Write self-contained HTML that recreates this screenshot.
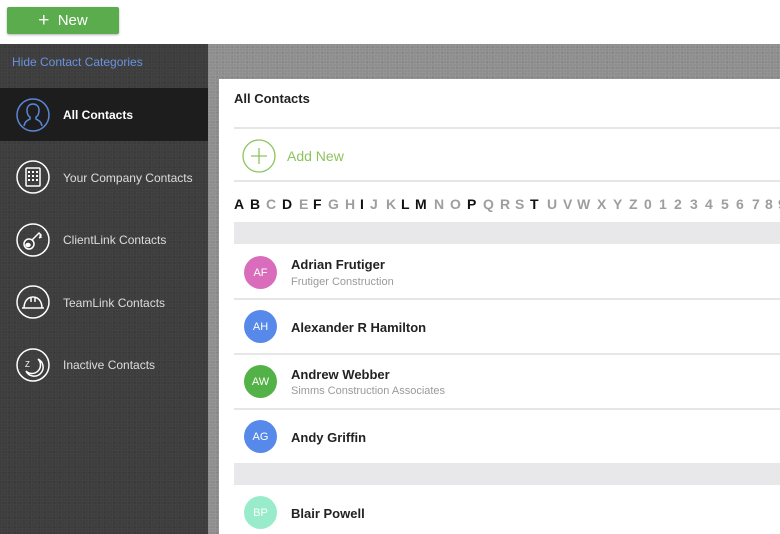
<!DOCTYPE html>
<html><head><meta charset="utf-8"><style>
*{margin:0;padding:0;box-sizing:border-box}
body{width:780px;height:534px;overflow:hidden;background:#fff;font-family:"Liberation Sans",sans-serif;position:relative}
.top{position:absolute;left:0;top:0;width:780px;height:44px;background:#fff}
.btn{position:absolute;left:7px;top:7px;width:112px;height:27px;background:#5aac4c;border-radius:2px;color:#fff;font-size:15px;line-height:27px;text-align:center;box-shadow:0 1px 2px rgba(0,0,0,.3)}
.btn b{font-weight:normal;font-size:19px;vertical-align:-1px}
.bg{position:absolute;left:208px;top:44px;width:572px;height:490px;background:#8c8c8c;background-image:radial-gradient(#999 1px,transparent 1.2px),radial-gradient(#7e7e7e 1px,transparent 1.2px);background-size:3px 3px,5px 5px;background-position:0 0,2px 1px}
.side{position:absolute;left:0;top:44px;width:208px;height:490px;background:#3d3d3d;background-image:radial-gradient(#444 1px,transparent 1.2px),radial-gradient(#353535 1px,transparent 1.2px);background-size:3px 3px,5px 5px;background-position:0 0,2px 1px}
.hide{position:absolute;left:12px;top:55px;color:#6a92e0;font-size:12px}
.sel{position:absolute;left:0;top:88px;width:208px;height:53px;background:#1d1d1d}
.item{position:absolute;left:63px;color:#ddd;font-size:12px}
.ic{position:absolute;left:16px;width:34px;height:34px}
.panel{position:absolute;left:219px;top:79px;width:561px;height:455px;background:#fff}
.abs{position:absolute}
.line{position:absolute;left:234px;right:0;height:2px;background:#e6e6e6}
.band{position:absolute;left:234px;right:0;height:22px;background:#e8e8ea}
.av{position:absolute;left:244px;width:33px;height:33px;border-radius:50%;color:#fff;font-size:11px;display:flex;align-items:center;justify-content:center;opacity:.95}
.nm{position:absolute;left:291px;font-size:13px;font-weight:bold;color:#222}
.co{position:absolute;left:291px;font-size:11px;color:#9a9a9a}
.L{position:absolute;top:196px;font-size:14px;font-weight:bold;color:#9e9e9e}
.L.b{color:#111}
</style></head><body>
<div class="top"><div class="btn"><b>+</b>&nbsp; New</div></div>
<div class="bg"></div>
<div class="side"></div>
<div class="hide">Hide Contact Categories</div>
<div class="sel"></div>
<svg class="ic" style="top:98px" viewBox="0 0 34 34" fill="none" stroke="#5b86d8" stroke-width="1.5"><circle cx="17" cy="17" r="16"/><path d="M8 28c1-5 4-6 6-7v-2c-2-1-3-4-3-7 0-4 3-6 6-6s6 2 6 6c0 3-1 6-3 7v2c2 1 5 2 6 7"/></svg>
<div class="item" style="top:108px;color:#fff;font-weight:bold">All Contacts</div>
<svg class="ic" style="top:160px" viewBox="0 0 34 34" fill="none" stroke="#fff" stroke-width="1.5"><circle cx="17" cy="17" r="16"/><rect x="10" y="8" width="14" height="18" rx="1"/><g fill="#fff" stroke="none"><rect x="12" y="11" width="2" height="2"/><rect x="16" y="11" width="2" height="2"/><rect x="20" y="11" width="2" height="2"/><rect x="12" y="15" width="2" height="2"/><rect x="16" y="15" width="2" height="2"/><rect x="20" y="15" width="2" height="2"/><rect x="12" y="19" width="2" height="2"/><rect x="16" y="19" width="2" height="2"/><rect x="20" y="19" width="2" height="2"/></g></svg>
<div class="item" style="top:171px">Your Company Contacts</div>
<svg class="ic" style="top:223px" viewBox="0 0 34 34" fill="none" stroke="#fff" stroke-width="1.5"><circle cx="17" cy="17" r="16"/><circle cx="13" cy="21" r="5"/><path d="M16 17l7-7 2 2-1 1 1 1-2 1"/><ellipse cx="12" cy="22" rx="2" ry="1.5" fill="#fff"/></svg>
<div class="item" style="top:233px">ClientLink Contacts</div>
<svg class="ic" style="top:285px" viewBox="0 0 34 34" fill="none" stroke="#fff" stroke-width="1.5"><circle cx="17" cy="17" r="16"/><path d="M6 23h22M8 23c0-7 4-11 9-11s9 4 9 11M15 12v5M19 12v5"/></svg>
<div class="item" style="top:296px">TeamLink Contacts</div>
<svg class="ic" style="top:348px" viewBox="0 0 34 34" fill="none" stroke="#fff" stroke-width="1.5"><circle cx="17" cy="17" r="16"/><path d="M22 11a9 9 0 1 1-12 12 8 8 0 0 0 12-12z"/><text x="9" y="19" font-size="8" fill="#fff" stroke="none" font-family="Liberation Sans">Z</text></svg>
<div class="item" style="top:358px">Inactive Contacts</div>

<div class="panel"></div>
<div class="abs" style="left:234px;top:91px;font-size:13px;font-weight:bold;color:#222">All Contacts</div>
<div class="line" style="top:127px"></div>
<svg class="abs" style="left:242px;top:139px" width="34" height="34" viewBox="0 0 34 34" fill="none" stroke="#8cc45e" stroke-width="1.3"><circle cx="17" cy="17" r="16"/><path d="M17 9v16M9 17h16"/></svg>
<div class="abs" style="left:287px;top:148px;font-size:14px;color:#8cc45e">Add New</div>
<div class="line" style="top:180px"></div>
<span class="L b" style="left:234px">A</span><span class="L b" style="left:250px">B</span><span class="L" style="left:266px">C</span><span class="L b" style="left:282px">D</span><span class="L" style="left:299px">E</span><span class="L b" style="left:313px">F</span><span class="L" style="left:328px">G</span><span class="L" style="left:345px">H</span><span class="L b" style="left:360px">I</span><span class="L" style="left:370px">J</span><span class="L" style="left:386px">K</span><span class="L b" style="left:401px">L</span><span class="L b" style="left:415px">M</span><span class="L" style="left:434px">N</span><span class="L" style="left:450px">O</span><span class="L b" style="left:467px">P</span><span class="L" style="left:483px">Q</span><span class="L" style="left:500px">R</span><span class="L" style="left:515px">S</span><span class="L b" style="left:530px">T</span><span class="L" style="left:547px">U</span><span class="L" style="left:563px">V</span><span class="L" style="left:577px">W</span><span class="L" style="left:597px">X</span><span class="L" style="left:613px">Y</span><span class="L" style="left:629px">Z</span><span class="L" style="left:644px">0</span><span class="L" style="left:659px">1</span><span class="L" style="left:674px">2</span><span class="L" style="left:690px">3</span><span class="L" style="left:705px">4</span><span class="L" style="left:721px">5</span><span class="L" style="left:736px">6</span><span class="L" style="left:752px">7</span><span class="L" style="left:765px">8</span><span class="L" style="left:778px">9</span>
<div class="band" style="top:222px"></div>
<div class="av" style="top:256px;background:#d965b9">AF</div>
<div class="nm" style="top:257px">Adrian Frutiger</div>
<div class="co" style="top:276px">Frutiger Construction</div>
<div class="line" style="top:298px"></div>
<div class="av" style="top:310px;background:#4d83e8">AH</div>
<div class="nm" style="top:320px">Alexander R Hamilton</div>
<div class="line" style="top:353px"></div>
<div class="av" style="top:365px;background:#4aae3e">AW</div>
<div class="nm" style="top:367px">Andrew Webber</div>
<div class="co" style="top:385px">Simms Construction Associates</div>
<div class="line" style="top:408px"></div>
<div class="av" style="top:420px;background:#4d83e8">AG</div>
<div class="nm" style="top:430px">Andy Griffin</div>
<div class="band" style="top:463px"></div>
<div class="av" style="top:496px;background:#93ecc9">BP</div>
<div class="nm" style="top:506px">Blair Powell</div>
</body></html>
